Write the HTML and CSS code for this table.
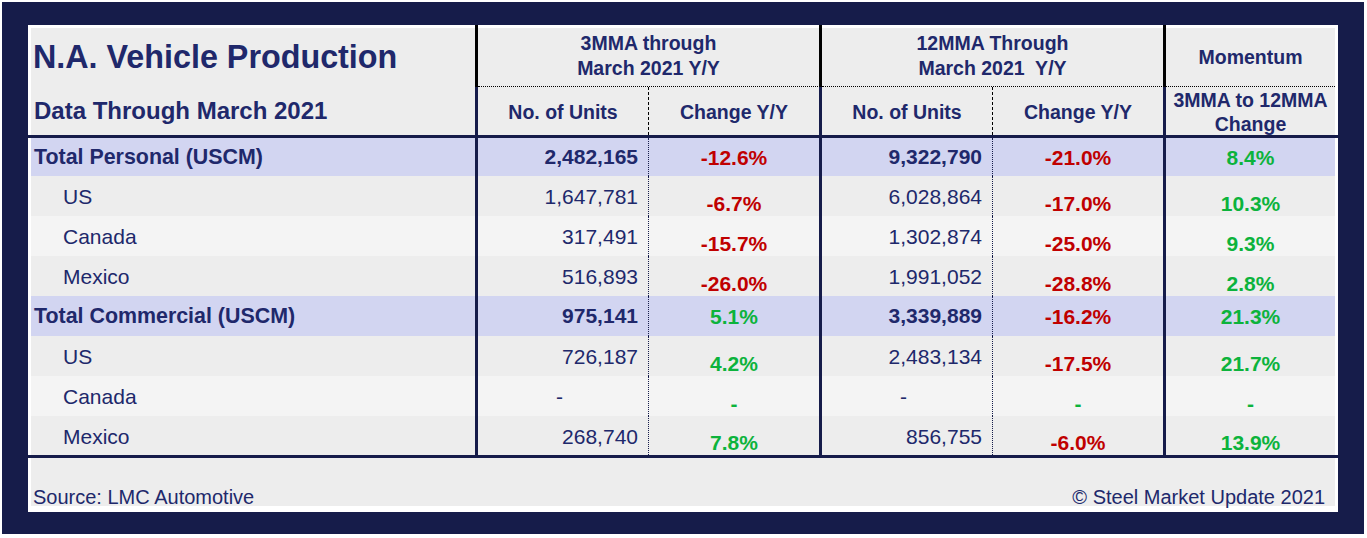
FILE: index.html
```html
<!DOCTYPE html>
<html lang="en">
<head>
<meta charset="utf-8">
<title>N.A. Vehicle Production</title>
<link rel="stylesheet" href="styles.css">
</head>
<body>
<div class="frame">
  <div class="panel">
    <div class="sheet">
      <div class="head">
        <div class="h-title">N.A. Vehicle Production</div>
        <div class="h-group g1">3MMA through<br>March 2021 Y/Y</div>
        <div class="h-group g2">12MMA Through<br>March 2021&nbsp; Y/Y</div>
        <div class="h-group g3">Momentum</div>
        <div class="h-sub">Data Through March 2021</div>
        <div class="h-col dashed">No. of Units</div>
        <div class="h-col thick">Change Y/Y</div>
        <div class="h-col dashed">No. of Units</div>
        <div class="h-col thick">Change Y/Y</div>
        <div class="h-col two">3MMA to 12MMA<br>Change</div>
      </div>
      <div class="rule"></div>
      <div class="body">
        <div class="row total first">
          <div class="c lab">Total Personal (USCM)</div>
          <div class="c num">2,482,165</div>
          <div class="c pct red thick">-12.6%</div>
          <div class="c num">9,322,790</div>
          <div class="c pct red thick">-21.0%</div>
          <div class="c pct green">8.4%</div>
        </div>
        <div class="row">
          <div class="c lab ind">US</div>
          <div class="c num">1,647,781</div>
          <div class="c pct red thick">-6.7%</div>
          <div class="c num">6,028,864</div>
          <div class="c pct red thick">-17.0%</div>
          <div class="c pct green">10.3%</div>
        </div>
        <div class="row alt">
          <div class="c lab ind">Canada</div>
          <div class="c num">317,491</div>
          <div class="c pct red thick">-15.7%</div>
          <div class="c num">1,302,874</div>
          <div class="c pct red thick">-25.0%</div>
          <div class="c pct green">9.3%</div>
        </div>
        <div class="row">
          <div class="c lab ind">Mexico</div>
          <div class="c num">516,893</div>
          <div class="c pct red thick">-26.0%</div>
          <div class="c num">1,991,052</div>
          <div class="c pct red thick">-28.8%</div>
          <div class="c pct green">2.8%</div>
        </div>
        <div class="row total">
          <div class="c lab">Total Commercial (USCM)</div>
          <div class="c num">975,141</div>
          <div class="c pct green thick">5.1%</div>
          <div class="c num">3,339,889</div>
          <div class="c pct red thick">-16.2%</div>
          <div class="c pct green">21.3%</div>
        </div>
        <div class="row">
          <div class="c lab ind">US</div>
          <div class="c num">726,187</div>
          <div class="c pct green thick">4.2%</div>
          <div class="c num">2,483,134</div>
          <div class="c pct red thick">-17.5%</div>
          <div class="c pct green">21.7%</div>
        </div>
        <div class="row alt">
          <div class="c lab ind">Canada</div>
          <div class="c num nil">-</div>
          <div class="c pct green thick">-</div>
          <div class="c num nil">-</div>
          <div class="c pct green thick">-</div>
          <div class="c pct green">-</div>
        </div>
        <div class="row last">
          <div class="c lab ind">Mexico</div>
          <div class="c num">268,740</div>
          <div class="c pct green thick">7.8%</div>
          <div class="c num">856,755</div>
          <div class="c pct red thick">-6.0%</div>
          <div class="c pct green">13.9%</div>
        </div>
      </div>
      <div class="rule"></div>
      <div class="foot">
        <span>Source: LMC Automotive</span>
        <span>© Steel Market Update 2021</span>
      </div>
    </div>
  </div>
</div>
</body>
</html>
```

FILE: styles.css
```css
* { box-sizing: border-box; }

html, body {
  margin: 0;
  padding: 0;
  background: #ffffff;
}

body {
  font-family: "Liberation Sans", Arial, sans-serif;
  color: #20286b;
}

.frame {
  width: 1362px;
  height: 532px;
  margin: 2px 3px 4px 2px;
  padding: 23px 26px 22px 26px;
  background: #161c4a;
}

.panel {
  width: 1310px;
  height: 487px;
  padding: 3px;
  background: #ffffff;
}

.sheet {
  width: 1304px;
  height: 481px;
  background: #ededed;
}

/* ---------- header ---------- */
.head {
  display: grid;
  grid-template-columns: 447px 171px 173px 171px 173px 169px;
  grid-template-rows: 62px 48px;
  margin-top: -3px;
}

.head > div {
  display: flex;
  background: #ededed;
  font-weight: bold;
}

.h-title {
  grid-column: 1;
  grid-row: 1;
  align-items: center;
  padding: 3px 0 0 2px;
  font-size: 32.3px;
  border-right: 3px solid #000;
  box-shadow: inset 0 3px 0 #ffffff;
}

.h-group {
  grid-row: 1;
  flex-direction: column;
  justify-content: center;
  align-items: center;
  text-align: center;
  font-size: 19.5px;
  line-height: 24.5px;
  padding: 3px 0 3px 0;
  border-bottom: 1px dotted #000;
  box-shadow: inset 0 3px 0 #ffffff;
}

.g1 { grid-column: 2 / span 2; border-right: 3px solid #000; }
.g2 { grid-column: 4 / span 2; border-right: 3px solid #000; white-space: nowrap; }
.g3 { grid-column: 6; padding-bottom: 0; }

.h-sub {
  grid-column: 1;
  grid-row: 2;
  align-items: center;
  padding-left: 3px;
  font-size: 24px;
  border-right: 3px solid #161c4a;
}

.h-col {
  grid-row: 2;
  justify-content: center;
  align-items: center;
  text-align: center;
  padding-top: 2px;
  font-size: 19.5px;
  line-height: 24.5px;
}

.h-col.dashed { border-right: 1px dashed #000; }
.h-col.thick { border-right: 3px solid #161c4a; }

/* ---------- rules ---------- */
.rule {
  height: 3px;
  margin: 0 -3px;
  background: #161c4a;
}

/* ---------- body ---------- */
.row {
  display: grid;
  grid-template-columns: 447px 171px 173px 171px 173px 169px;
  height: 40px;
  background: #ededed;
  font-size: 21px;
}

.row.first { height: 38px; }
.row.last { height: 39px; }
.row.alt { background: #f4f4f4; }
.row.total { background: #d2d5f1; font-weight: bold; }

.c {
  display: flex;
  align-items: center;
  padding-top: 2px;
  white-space: nowrap;
}

.row.total .c { padding-top: 0; }

.lab {
  padding-left: 3px;
  border-right: 3px solid #161c4a;
}

.row.total .lab { font-size: 21.4px; }

.lab.ind { padding-left: 32px; }

.num {
  justify-content: flex-end;
  padding-right: 10px;
  border-right: 1px dotted #161c4a;
}

.num.nil { padding-right: 85px; }

.pct {
  justify-content: center;
  font-weight: bold;
  align-items: flex-end;
  padding-top: 0;
}

.row.total .pct {
  align-items: center;
  padding-top: 1px;
}

.pct.thick { border-right: 3px solid #161c4a; }

.red { color: #c00000; }
.green { color: #0cb33c; }

/* ---------- footer ---------- */
.foot {
  display: flex;
  justify-content: space-between;
  align-items: flex-end;
  height: 51px;
  padding: 0 10px 0 2px;
  font-size: 20px;
  line-height: 23px;
}
```
